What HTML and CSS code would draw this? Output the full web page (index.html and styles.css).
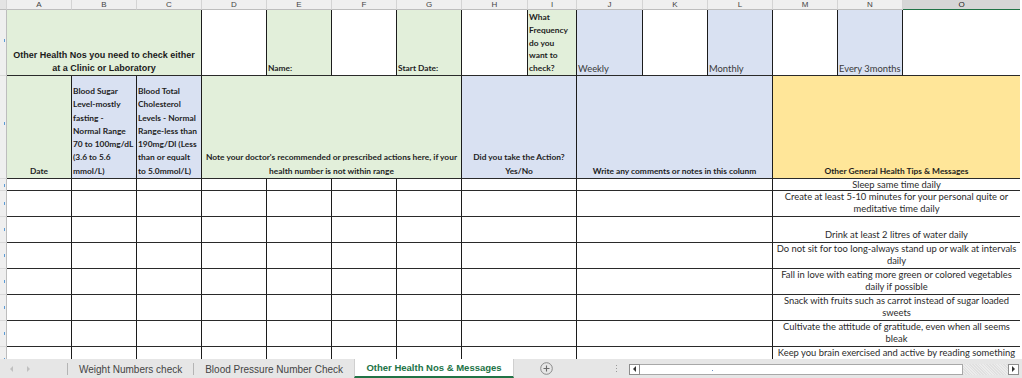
FILE: index.html
```html
<!DOCTYPE html>
<html lang="en">
<head>
    <meta charset="UTF-8">
    <meta name="viewport" content="width=device-width, initial-scale=1.0">
    <title>Other Health Nos &amp; Messages</title>
    <link rel="stylesheet" href="styles.css">
</head>
<body>
    <div class="sheet">
        <table class="grid">
            <colgroup>
                <col class="w-rh">
                <col class="w65"><col class="w65"><col class="w65"><col class="w65">
                <col class="w65"><col class="w65"><col class="w65">
                <col class="w66"><col class="w49"><col class="w66">
                <col class="w65"><col class="w65"><col class="w65"><col class="w65">
                <col class="w117">
            </colgroup>

            <!-- column letters -->
            <tr class="col-heads">
                <th class="corner"></th>
                <th>A</th><th>B</th><th>C</th><th>D</th><th>E</th><th>F</th><th>G</th>
                <th>H</th><th>I</th><th>J</th><th>K</th><th>L</th><th>M</th><th>N</th>
                <th class="selected">O</th>
            </tr>

            <!-- row 1 -->
            <tr class="row-top">
                <td class="rh"></td>
                <td colspan="3" class="green title">Other Health Nos you need to check either<br>at a Clinic or Laboratory</td>
                <td class="blank"></td>
                <td class="green label">Name:</td>
                <td class="blank"></td>
                <td class="green label">Start Date:</td>
                <td class="blank"></td>
                <td class="green label freq">What<br>Frequency<br>do you<br>want to<br>check?</td>
                <td class="blue option">Weekly</td>
                <td class="blank"></td>
                <td class="blue option">Monthly</td>
                <td class="blank"></td>
                <td class="blue option">Every 3months</td>
                <td class="blank last"></td>
            </tr>

            <!-- row 2 -->
            <tr class="row-heads">
                <td class="rh"></td>
                <td class="green head">Date</td>
                <td class="blue head left">Blood Sugar<br>Level-mostly<br>fasting -<br>Normal Range<br>70 to 100mg/dL<br>(3.6 to 5.6<br>mmol/L)</td>
                <td class="blue head left">Blood Total<br>Cholesterol<br>Levels - Normal<br>Range-less than<br>190mg/Dl (Less<br>than or equalt<br>to 5.0mmol/L)</td>
                <td colspan="4" class="green head">Note your doctor's recommended or prescribed actions here, if your<br>health number is not within range</td>
                <td colspan="2" class="blue head">Did you take the Action?<br>Yes/No</td>
                <td colspan="3" class="blue head">Write any comments or notes in this colunm</td>
                <td colspan="3" class="yellow head last">Other General Health Tips &amp; Messages</td>
            </tr>

            <tr class="row-short">
                <td class="rh"></td>
                <td></td><td></td><td></td><td></td><td></td><td></td><td></td>
                <td colspan="2"></td><td colspan="3"></td>
                <td colspan="3" class="tip last">Sleep same time daily</td>
            </tr>
            <tr class="row-data">
                <td class="rh"></td>
                <td></td><td></td><td></td><td></td><td></td><td></td><td></td>
                <td colspan="2"></td><td colspan="3"></td>
                <td colspan="3" class="tip last">Create at least 5-10 minutes for your personal quite or<br>meditative time daily</td>
            </tr>
            <tr class="row-data">
                <td class="rh"></td>
                <td></td><td></td><td></td><td></td><td></td><td></td><td></td>
                <td colspan="2"></td><td colspan="3"></td>
                <td colspan="3" class="tip last">Drink at least 2 litres of water daily</td>
            </tr>
            <tr class="row-data">
                <td class="rh"></td>
                <td></td><td></td><td></td><td></td><td></td><td></td><td></td>
                <td colspan="2"></td><td colspan="3"></td>
                <td colspan="3" class="tip last">Do not sit for too long-always stand up or walk at intervals<br>daily</td>
            </tr>
            <tr class="row-data">
                <td class="rh"></td>
                <td></td><td></td><td></td><td></td><td></td><td></td><td></td>
                <td colspan="2"></td><td colspan="3"></td>
                <td colspan="3" class="tip last">Fall in love with eating more green or colored vegetables<br>daily if possible</td>
            </tr>
            <tr class="row-data">
                <td class="rh"></td>
                <td></td><td></td><td></td><td></td><td></td><td></td><td></td>
                <td colspan="2"></td><td colspan="3"></td>
                <td colspan="3" class="tip last">Snack with fruits such as carrot instead of sugar loaded<br>sweets</td>
            </tr>
            <tr class="row-data">
                <td class="rh"></td>
                <td></td><td></td><td></td><td></td><td></td><td></td><td></td>
                <td colspan="2"></td><td colspan="3"></td>
                <td colspan="3" class="tip last">Cultivate the attitude of gratitude, even when all seems<br>bleak</td>
            </tr>
            <tr class="row-last">
                <td class="rh"></td>
                <td></td><td></td><td></td><td></td><td></td><td></td><td></td>
                <td colspan="2"></td><td colspan="3"></td>
                <td colspan="3" class="tip tip-top last">Keep you brain exercised and active by reading something</td>
            </tr>
        </table>
    </div>

    <!-- sheet tabs + horizontal scrollbar -->
    <div class="tabbar">
        <div class="nav">
            <span class="arrow arrow-left"></span>
            <span class="arrow arrow-right"></span>
        </div>
        <div class="tab">Weight Numbers check</div>
        <div class="tab">Blood Pressure Number Check</div>
        <div class="tab active">Other Health Nos &amp; Messages</div>
        <div class="add-sheet">
            <svg width="13" height="13" viewBox="0 0 13 13">
                <circle cx="6.5" cy="6.5" r="5.8" fill="none" stroke="#8a8a8a" stroke-width="1"/>
                <path d="M6.5 3.5v6M3.5 6.5h6" stroke="#6a6a6a" stroke-width="1.1"/>
            </svg>
        </div>
        <div class="dots"><i></i><i></i><i></i></div>
        <div class="hscroll">
            <span class="sbtn"><span class="tri-left"></span></span>
            <span class="track"><i class="mark"></i></span>
            <span class="hatch"></span>
            <span class="sbtn"><span class="tri-right"></span></span>
        </div>
    </div>
</body>
</html>
```

FILE: styles.css
```css
/* General */
body {
    margin: 0;
    width: 1022px;
    height: 378px;
    overflow: hidden;
    background: #ffffff;
    font-family: 'Lato', 'Liberation Sans', sans-serif;
    color: #1e1e1e;
}

.sheet {
    height: 359px;
    overflow: hidden;
}

/* Grid */
.grid {
    border-collapse: separate;
    border-spacing: 0;
    table-layout: fixed;
    width: 1020px;
}

.w-rh { width: 7px; }
.w65 { width: 65px; }
.w66 { width: 66px; }
.w49 { width: 49px; }
.w117 { width: 117px; }

.grid td {
    box-sizing: border-box;
    padding: 0 1px;
    font-size: 9.4px;
    line-height: 13px;
    vertical-align: bottom;
    white-space: nowrap;
    overflow: hidden;
    border-right: 1px solid #1c1c1c;
    border-bottom: 1px solid #2a2a2a;
}

.grid td.last {
    border-right: none;
}

/* Column letters */
.col-heads th {
    box-sizing: border-box;
    height: 10px;
    padding: 0;
    font: 8px/9px 'Liberation Sans', Arial, sans-serif;
    color: #444444;
    background: #efefef;
    border-right: 1px solid #d4d4d4;
    border-bottom: 1px solid #bdbdbd;
    overflow: hidden;
}

.col-heads th.corner {
    background: #e4e4e4;
}

.col-heads th.selected {
    background: #d6d6d6;
    color: #222222;
    border-bottom: 1px solid #217346;
    border-right: none;
}

/* Row numbers (cut off at the left edge) */
.grid td.rh {
    padding: 0;
    background: #efefef;
    border-right: 1px solid #bdbdbd;
    border-bottom: 1px solid #d8d8d8;
    position: relative;
}

.grid td.rh::after {
    content: "";
    position: absolute;
    right: 1px;
    top: 45%;
    width: 1px;
    height: 3px;
    background: #5b9bd5;
}

/* Row heights */
.row-top td { height: 65px; }
.row-heads td { height: 103px; }
.row-short td { height: 12px; }
.row-data td { height: 26px; }
.row-last td { height: 26px; }

/* Fills */
.green { background: #e2efda; }
.blue { background: #d9e1f2; }
.yellow { background: #ffe699; }

.blank { background: #ffffff; }

.grid td.title {
    font-family: 'Liberation Sans', Arial, sans-serif;
    font-weight: bold;
    font-size: 9px;
    text-align: center;
    color: #1a1a1a;
}

.grid td.label {
    font-weight: bold;
    font-size: 8.4px;
    text-align: left;
}

.grid td.freq {
    vertical-align: top;
    line-height: 12.8px;
    padding-top: 1px;
}

.option {
    color: #3a3a3a;
}

.grid td.head {
    font-weight: bold;
    font-size: 8.4px;
    line-height: 13.3px;
    text-align: center;
}

.grid td.head.left {
    text-align: left;
}

/* Tips column */
.grid td.tip {
    text-align: center;
    color: #2b2b2b;
    line-height: 12.5px;
}

.row-short td.tip {
    line-height: 11px;
}

.grid td.tip-top {
    vertical-align: top;
}

/* Tab bar */
.tabbar {
    height: 19px;
    background: #e6e6e6;
    display: flex;
    align-items: stretch;
    font-family: 'Liberation Sans', Arial, sans-serif;
    font-size: 10px;
    color: #444444;
}

.nav {
    width: 67px;
    display: flex;
    align-items: center;
    gap: 14px;
    padding-left: 10px;
    box-sizing: border-box;
}

.arrow {
    width: 0;
    height: 0;
    border-top: 3px solid transparent;
    border-bottom: 3px solid transparent;
}

.arrow-left { border-right: 3px solid #c0c0c0; }
.arrow-right { border-left: 3px solid #c0c0c0; }

.tab {
    display: flex;
    align-items: center;
    padding: 0 11px;
    border-left: 1px solid #b4b4b4;
    margin: 4px 0 3px;
    white-space: nowrap;
}

.tab.active {
    margin: 0;
    padding: 0 9px;
    width: 160px;
    box-sizing: border-box;
    justify-content: center;
    background: #ffffff;
    color: #217346;
    font-weight: bold;
    font-size: 9.5px;
    border-left: 1px solid #cfcfcf;
    border-right: 1px solid #cfcfcf;
    border-bottom: 2px solid #217346;
}

.add-sheet {
    width: 64px;
    display: flex;
    align-items: center;
    justify-content: center;
}

.dots {
    width: 51px;
    box-sizing: border-box;
    padding-right: 12px;
    display: flex;
    flex-direction: column;
    align-items: flex-end;
    justify-content: center;
    gap: 2px;
}

.dots i {
    width: 1px;
    height: 1px;
    background: #9a9a9a;
}

.hscroll {
    display: flex;
    align-items: center;
    height: 12px;
    margin-top: 4px;
    width: 390px;
}

.sbtn {
    width: 11px;
    height: 11px;
    border: 1px solid #8c8c8c;
    background: #ffffff;
    display: flex;
    align-items: center;
    justify-content: center;
    box-sizing: border-box;
}

.tri-left, .tri-right {
    width: 0;
    height: 0;
    border-top: 3px solid transparent;
    border-bottom: 3px solid transparent;
}

.tri-left { border-right: 3px solid #333333; }
.tri-right { border-left: 3px solid #333333; }

.track {
    width: 323px;
    height: 11px;
    background: #ffffff;
    border-top: 1px solid #a8a8a8;
    border-bottom: 1px solid #a8a8a8;
    border-right: 1px solid #a8a8a8;
    box-sizing: border-box;
    position: relative;
}

.track .mark {
    position: absolute;
    left: 72px;
    top: 5px;
    width: 1px;
    height: 1px;
    background: #6a8fc8;
}

.hatch {
    width: 45px;
    height: 11px;
    background: repeating-linear-gradient(45deg, #e0e0e0 0 1px, #ececec 1px 2px);
}
```
